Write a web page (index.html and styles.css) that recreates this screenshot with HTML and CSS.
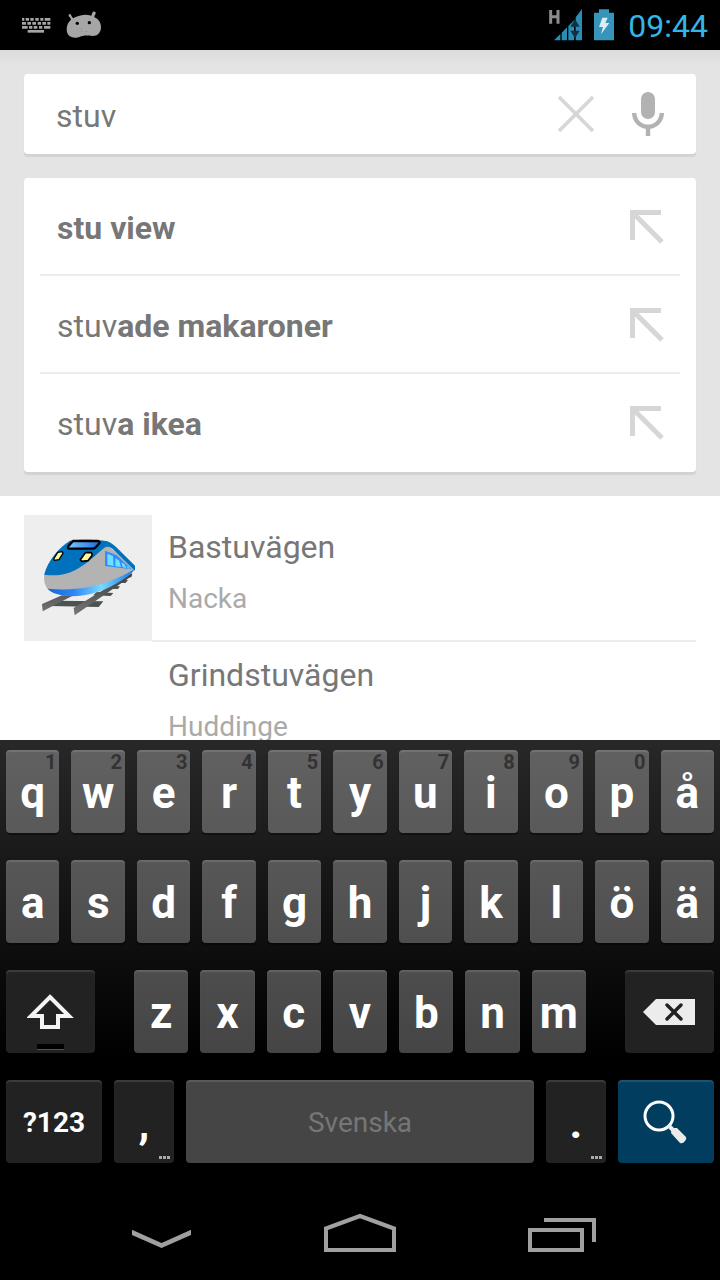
FILE: index.html
```html
<!DOCTYPE html>
<html lang="sv">
<head>
<meta charset="utf-8">
<meta name="viewport" content="width=device-width, initial-scale=1">
<title>stuv</title>
<link rel="stylesheet" href="styles.css">
</head>
<body>
<div class="screen">
  <header class="status">
    <svg class="status-keyboard" width="30" height="18" viewBox="0 0 90 54" aria-hidden="true">
      <g fill="none" stroke="#a6a6a6" stroke-width="8">
        <path d="M3 10H88" stroke-dasharray="7 4 10 4 10 5 10 5 9 4 17 0"/>
        <path d="M3 22H88" stroke-dasharray="12 4 11 4 11 5 10 4 11 4 9 0"/>
        <path d="M3 34H88" stroke-dasharray="17 4 10 4 11 5 10 5 19 0"/>
        <path d="M20 46H69"/>
      </g>
    </svg>
    <svg class="status-bean" width="36" height="28" viewBox="198 33 108 84" aria-hidden="true">
      <path fill="#a6a6a6" d="M206 44c3-4 8-1 8 3l5 8c10-6 22-10 36-11 7 0 13 1 19 3l3-9c2-5 9-4 10 1 1 4-2 4-3 7l-1 6c12 5 20 15 20 29 0 17-10 27-25 27-9 0-16-2-27-1-10 1-14 6-26 6-14 0-25-8-25-25 0-13 5-22 13-29l-3-7c-3-2-5-4-4-8z"/>
      <circle cx="232" cy="70" r="5"/><circle cx="268" cy="68" r="5"/>
      <path d="M243 85h3v3h-3zM243 92h3v3h-3zM259 93h3v3h-3z" fill="#8a8a8a"/>
    </svg>
    <span class="status-space"></span>
    <svg class="status-signal" width="36" height="34" viewBox="84 24 108 102" role="img" aria-label="H">
      <path fill="none" stroke="#8c8c8c" stroke-width="9" d="M92 30V71M114 30V71M92 50H114"/>
      <path fill="#2b8cb4" d="M102 121L121 102V121ZM125 98L141 82V121H125ZM145 78L162 61V121H145ZM167 52L186 27V121H167Z"/>
      <path fill="#0b3444" d="M165 57L179 80H151ZM151 92H179L165 115Z"/>
    </svg>
    <svg class="status-battery" width="20" height="32" viewBox="222 26 60 96" aria-hidden="true">
      <path fill="#3795bb" d="M237 27H267V37H282V120H222V37H237Z"/>
      <path fill="#dceef5" d="M247 52H263L256 68H268L243 102L249 80H237Z"/>
    </svg>
    <time class="clock">09:44</time>
  </header>

  <section class="search">
    <form class="search-box">
      <input class="query" type="text" value="stuv" aria-label="Sök">
      <button class="icon-button" type="button" aria-label="Rensa">
        <svg width="36" height="36" viewBox="0 0 36 36"><path d="M1 1L35 35M35 1L1 35" fill="none" stroke="#d6d6d6" stroke-width="3.600"/></svg>
      </button>
      <button class="icon-button" type="button" aria-label="Röstsökning">
        <svg width="32" height="44" viewBox="0 0 32 44"><rect x="9" y="0" width="14" height="27" rx="7" fill="#b2b2b2"/><path d="M2.200 21A13.800 13.800 0 0 0 29.800 21M16 35V44" fill="none" stroke="#b2b2b2" stroke-width="4.400"/></svg>
      </button>
    </form>
    <ul class="suggestions">
      <li class="suggestion"><span class="suggestion-text"><b>stu view</b></span>
        <button class="icon-button" type="button" aria-label="Använd stu view"><svg width="34" height="34" viewBox="0 0 34 34"><path d="M31 2.500H2.500V30M3 3L32 32" fill="none" stroke="#d6d6d6" stroke-width="5"/></svg></button></li>
      <li class="suggestion"><span class="suggestion-text">stuv<b>ade makaroner</b></span>
        <button class="icon-button" type="button" aria-label="Använd stuvade makaroner"><svg width="34" height="34" viewBox="0 0 34 34"><path d="M31 2.500H2.500V30M3 3L32 32" fill="none" stroke="#d6d6d6" stroke-width="5"/></svg></button></li>
      <li class="suggestion"><span class="suggestion-text">stuv<b>a ikea</b></span>
        <button class="icon-button" type="button" aria-label="Använd stuva ikea"><svg width="34" height="34" viewBox="0 0 34 34"><path d="M31 2.500H2.500V30M3 3L32 32" fill="none" stroke="#d6d6d6" stroke-width="5"/></svg></button></li>
    </ul>
  </section>

  <ul class="results">
    <li class="result">
      <div class="thumb thumb-filled">
        <svg class="train" viewBox="72 45 384 378" aria-hidden="true">
          <defs>
            <linearGradient id="glow"><stop offset="0" stop-color="#1565e0"/><stop offset=".3" stop-color="#2b86f4"/><stop offset=".62" stop-color="#7ad8ff"/><stop offset="1" stop-color="#1b74e8"/></linearGradient>
            <linearGradient id="pane"><stop offset="0" stop-color="#7cc8ff"/><stop offset="1" stop-color="#1d6be0"/></linearGradient>
            <linearGradient id="rail" x1="0" y1="0" x2="0" y2="1"><stop offset="0" stop-color="#3a3a3a"/><stop offset="1" stop-color="#777"/></linearGradient>
          </defs>
          <path fill="#4b5250" d="M166 302L310 304L296 321L148 318ZM290 276L340 279L332 288L280 286ZM322 257L360 259L354 267L312 266ZM350 239L384 240L377 249L340 248ZM375 221L397 222L394 232L366 232Z"/>
          <path fill="url(#rail)" d="M126 312L186 286L218 287L128 334ZM221 324L290 282L396 218L392 230L224 346Z"/>
          <path fill="#b3b3b3" d="M133 222C180 226 250 195 320 134L405 205C402 216 395 222 380 230L240 276L145 270C133 255 131 240 133 222Z"/>
          <path fill="url(#glow)" d="M143 266C180 270 225 269 262 262C315 252 365 232 402 208C396 222 375 236 345 253C310 273 265 289 215 289C180 287 153 279 143 266Z"/>
          <path fill="#0071bc" d="M133 222C144 180 178 142 210 122C240 118 290 119 322 124C336 130 344 137 352 145L405 197V212L345 154C334 142 324 137 313 143C260 188 218 236 133 224Z"/>
          <path fill="url(#pane)" stroke="#000" stroke-width="7" stroke-linejoin="round" d="M219 123L295 123Q301 125 298 130L286 143Q283 146 276 146H208Q202 145 205 139Z"/>
          <path fill="#fff79a" stroke="#000" stroke-width="4" stroke-linejoin="round" d="M173 157L187 155L189 160L177 179L163 181L161 177Z"/>
          <path fill="#fff79a" stroke="#000" stroke-width="5" stroke-linejoin="round" d="M256 158L274 158L277 165L264 182L245 184L241 179Z"/>
          <path fill="#2d8cff" d="M315 152L350 166L395 208L315 198Z"/>
          <path fill="#6fe0ff" d="M322 161L339 168L341 198L322 194ZM346 175L357 181L363 201L346 199ZM364 187L373 192L379 204L368 202ZM379 196L384 200L391 207L383 205Z"/>
        </svg>
      </div>
      <div class="result-body result-divided">
        <div class="result-title">Bastuvägen</div>
        <div class="result-place">Nacka</div>
      </div>
    </li>
    <li class="result">
      <div class="thumb"></div>
      <div class="result-body">
        <div class="result-title">Grindstuvägen</div>
        <div class="result-place">Huddinge</div>
      </div>
    </li>
  </ul>

  <section class="keyboard" aria-label="Tangentbord">
    <div class="key-row letters">
      <button class="key">q<span class="hint">1</span></button>
      <button class="key">w<span class="hint">2</span></button>
      <button class="key">e<span class="hint">3</span></button>
      <button class="key">r<span class="hint">4</span></button>
      <button class="key">t<span class="hint">5</span></button>
      <button class="key">y<span class="hint">6</span></button>
      <button class="key">u<span class="hint">7</span></button>
      <button class="key">i<span class="hint">8</span></button>
      <button class="key">o<span class="hint">9</span></button>
      <button class="key">p<span class="hint">0</span></button>
      <button class="key">å</button>
    </div>
    <div class="key-row letters">
      <button class="key">a</button>
      <button class="key">s</button>
      <button class="key">d</button>
      <button class="key">f</button>
      <button class="key">g</button>
      <button class="key">h</button>
      <button class="key">j</button>
      <button class="key">k</button>
      <button class="key">l</button>
      <button class="key">ö</button>
      <button class="key">ä</button>
    </div>
    <div class="key-row shift-row">
      <button class="key key-dark" aria-label="Skift">
        <svg width="48" height="38" viewBox="0 0 48 38"><path d="M23 3L42 22H31V33H15V22H4Z" fill="none" stroke="#f4f4f4" stroke-width="4"/></svg>
        <span class="shift-light"></span>
      </button>
      <div class="shift-letters">
        <button class="key">z</button>
        <button class="key">x</button>
        <button class="key">c</button>
        <button class="key">v</button>
        <button class="key">b</button>
        <button class="key">n</button>
        <button class="key">m</button>
      </div>
      <button class="key key-dark" aria-label="Radera">
        <svg width="54" height="28" viewBox="0 0 54 28"><path d="M0 13L13 0H52V26H13Z" fill="#ececec"/><path d="M24 6L38 20M38 6L24 20" stroke="#222" stroke-width="3.400" stroke-linecap="round"/></svg>
      </button>
    </div>
    <div class="key-row bottom-row">
      <button class="key key-dark key-symbols">?123</button>
      <button class="key key-dark key-mark">,<span class="more" aria-hidden="true"><i></i><i></i><i></i></span></button>
      <button class="key key-space">Svenska</button>
      <button class="key key-dark key-mark">.<span class="more" aria-hidden="true"><i></i><i></i><i></i></span></button>
      <button class="key key-search" aria-label="Sök">
        <svg width="46" height="46" viewBox="0 0 46 46"><circle cx="16" cy="16" r="14" fill="none" stroke="#fff" stroke-width="3"/><path d="M25 25L31 31" stroke="#eee" stroke-width="4"/><path d="M29 28L34 28L43 37Q44 39 42 41Q40 44 37 43L28 33Z" fill="#eaeaea"/></svg>
      </button>
    </div>
  </section>

  <nav class="navbar">
    <button class="nav-button" aria-label="Dölj tangentbordet"><svg width="80" height="40" viewBox="0 0 80 40"><path d="M12 18H12.500L41.500 31L70.500 18H71V23L41.500 36L12 23Z" fill="#a0a0a0"/></svg></button>
    <button class="nav-button" aria-label="Hem"><svg width="80" height="40" viewBox="0 0 80 40"><path d="M6 38V16.500L40 4L74 16.500V38Z" fill="none" stroke="#a0a0a0" stroke-width="4"/></svg></button>
    <button class="nav-button" aria-label="Senaste appar"><svg width="80" height="40" viewBox="0 0 80 40"><path d="M10 18H62V38H10ZM24 8H74V30" fill="none" stroke="#a0a0a0" stroke-width="4"/></svg></button>
  </nav>
</div>
</body>
</html>
```
FILE: styles.css
```css
* {
  box-sizing: border-box;
}

body {
  margin: 0;
  background: #000;
  font-family: Roboto, "Noto Sans", sans-serif;
}

button {
  margin: 0;
  padding: 0;
  border: 0;
  background: none;
  font: inherit;
  color: inherit;
}

svg {
  display: block;
}

ul {
  list-style: none;
  margin: 0;
  padding: 0;
}

.screen {
  display: flex;
  flex-direction: column;
  height: 100vh;
}

.status {
  display: flex;
  align-items: center;
  height: 50px;
  padding: 0 12px 0 21px;
  background: #000;
}

.status-bean {
  margin-left: 15px;
}

.status-space {
  flex: 1;
}

.status-battery {
  margin: 0 14px 0 10px;
}

.clock {
  padding-top: 2px;
  font-size: 32px;
  line-height: 48px;
  color: #33b5e5;
}

.search {
  padding: 24px;
  background: linear-gradient(#dcdcdc, #e4e4e4 16px);
}

.search-box,
.suggestions {
  border-radius: 4px;
  background: #fff;
  box-shadow: 0 3px 1px #d2d2d2;
}

.search-box {
  display: flex;
  align-items: center;
  gap: 38px;
  height: 80px;
  margin-bottom: 24px;
  padding: 0 32px;
}

.query {
  flex: 1;
  min-width: 0;
  height: 80px;
  padding: 4px 0 0;
  border: 0;
  outline: 0;
  background: none;
  font: 32px/40px Roboto, "Noto Sans", sans-serif;
  color: #777;
}

.suggestions {
  padding: 0 16px;
}

.suggestion {
  display: flex;
  align-items: center;
  height: 98px;
  padding: 2px 16px 0 17px;
  border-bottom: 2px solid #ececec;
  font-size: 32px;
  line-height: 40px;
  color: #777;
}

.suggestion:last-child {
  border-bottom-color: transparent;
}

.suggestion-text {
  flex: 1;
  padding-top: 2px;
}

.results {
  flex: 1;
  min-height: 0;
  overflow: hidden;
  padding: 18px 24px 0;
  background: #fff;
}

.result {
  display: flex;
  align-items: center;
  height: 128px;
}

.thumb {
  flex: none;
  width: 128px;
  height: 126px;
}

.thumb-filled {
  background: #eee;
}

.train {
  width: 100%;
  height: 100%;
}

.result-body {
  flex: 1;
  height: 128px;
  padding: 13px 16px 0;
  border-bottom: 2px solid transparent;
}

.result-divided {
  border-bottom-color: #ececec;
}

.result-title {
  margin-bottom: 14px;
  font-size: 32px;
  line-height: 40px;
  color: #777;
}

.result-place {
  font-size: 28px;
  line-height: 36px;
  color: #aaa;
}

.keyboard {
  display: flex;
  flex-direction: column;
  gap: 27px;
  padding: 10px 6px 21px;
  background: linear-gradient(#282828, #000 320px);
}

.key-row {
  display: grid;
  gap: 12px;
}

.letters {
  grid-template-columns: repeat(11, minmax(0, 1fr));
}

.shift-row {
  grid-template-columns: 89fr 452fr 89fr;
  gap: 39px;
}

.shift-letters {
  display: grid;
  grid-template-columns: repeat(7, minmax(0, 1fr));
  gap: 12px;
}

.bottom-row {
  grid-template-columns: 96fr 60fr 348fr 60fr 96fr;
}

.key {
  position: relative;
  display: flex;
  align-items: center;
  justify-content: center;
  height: 83px;
  padding-top: 2px;
  border-radius: 4px;
  background: rgba(255, 255, 255, 0.27);
  box-shadow: inset 0 2px 1px rgba(255, 255, 255, 0.12), 0 2px 1px rgba(0, 0, 0, 0.4);
  font-size: 44px;
  font-weight: 700;
  line-height: 52px;
  color: #fff;
}

.key-dark {
  background: #222;
}

.key-search {
  background: #003d5e;
}

.key-symbols {
  font-size: 28px;
}

.key-mark {
  padding-top: 2px;
}

.key-space {
  font-size: 28px;
  font-weight: 400;
  color: #767676;
}

.hint {
  position: absolute;
  top: 2px;
  right: 3px;
  font-size: 20px;
  line-height: 20px;
  color: #333;
}

.more {
  position: absolute;
  right: 4px;
  bottom: 4px;
  display: flex;
  gap: 1px;
}

.more i {
  width: 3px;
  height: 3px;
  background: #aaa;
}

.shift-light {
  position: absolute;
  bottom: 3px;
  left: 50%;
  width: 27px;
  height: 6px;
  margin-left: -14px;
  border-bottom: 1px solid #555;
  background: #000;
}

.navbar {
  display: grid;
  grid-template-columns: repeat(3, 1fr);
  height: 96px;
  padding: 0 60px;
  background: #000;
}

.nav-button {
  display: flex;
  align-items: center;
  justify-content: center;
}
```
